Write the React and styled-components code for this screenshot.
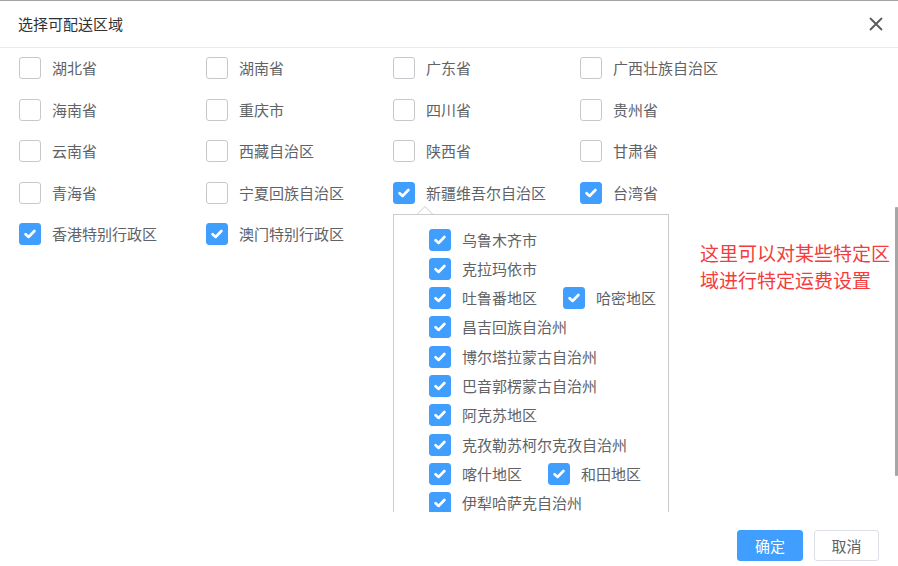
import React from "react";
import styled, { createGlobalStyle } from "styled-components";

const GlobalStyle = createGlobalStyle`
  html, body {
    margin: 0;
    padding: 0;
    background: #fff;
  }
  body {
    font-family: "Noto Sans CJK SC", "Noto Sans", sans-serif;
  }
`;

const Dialog = styled.div`
  position: relative;
  width: 898px;
  height: 566px;
  box-sizing: border-box;
  border-top: 1px solid #a3a3a3;
  background: #fff;
  display: flex;
  flex-direction: column;
  overflow: hidden;
`;

const Header = styled.div`
  flex: none;
  height: 46px;
  display: flex;
  align-items: center;
  justify-content: space-between;
  padding: 0 15px 0 18px;
  border-bottom: 1px solid #ebebeb;
`;

const Title = styled.span`
  font-size: 15px;
  line-height: 20px;
  color: #303133;
`;

const CloseButton = styled.button`
  width: 14px;
  height: 14px;
  padding: 0;
  border: 0;
  background: none;
  display: flex;
  cursor: pointer;
`;

const Body = styled.div`
  position: relative;
  flex: none;
  height: 464px;
  box-sizing: border-box;
  padding: 9px 0 0 19px;
  overflow: hidden;
`;

// thin scroll thumb at the dialog's right edge
const ScrollThumb = styled.div`
  position: absolute;
  right: 0;
  top: 206px;
  width: 3px;
  height: 269px;
  background: #a6a6a6;
  border-radius: 1px;
`;

const ProvinceGrid = styled.div`
  display: grid;
  grid-template-columns: repeat(4, 187px);
  row-gap: 19.5px;
`;

const Option = styled.div`
  position: relative;
  display: flex;
  align-items: center;
  gap: 11px;
  height: 22px;
  font-size: 15px;
  line-height: 22px;
  color: #606266;
  white-space: nowrap;
  cursor: pointer;
`;

const Box = styled.span`
  flex: none;
  width: 22px;
  height: 22px;
  box-sizing: border-box;
  border-radius: 3px;
  border: 1px solid ${(p) => (p.$checked ? "#409eff" : "#c6c8cc")};
  background: ${(p) => (p.$checked ? "#409eff" : "#fff")};
  display: flex;
  align-items: center;
  justify-content: center;
`;

const Popover = styled.div`
  position: absolute;
  top: 32px;
  left: 0;
  z-index: 2;
  width: 276px;
  height: 320px;
  box-sizing: border-box;
  padding: 14px 5px 0 35px;
  border: 1px solid #cccccc;
  border-bottom: 0;
  background: #fff;
  display: flex;
  flex-wrap: wrap;
  align-content: flex-start;
  column-gap: 26px;
  row-gap: 7.33px;

  &::before,
  &::after {
    content: "";
    position: absolute;
    width: 0;
    height: 0;
    border-left: 8px solid transparent;
    border-right: 8px solid transparent;
  }
  &::before {
    top: -9px;
    left: 23px;
    border-bottom: 8px solid #cccccc;
  }
  &::after {
    top: -7.5px;
    left: 24px;
    border-left-width: 7px;
    border-right-width: 7px;
    border-bottom: 7px solid #fff;
  }
`;

const Note = styled.div`
  position: absolute;
  left: 700px;
  top: 238px;
  width: 192px;
  font-size: 19px;
  line-height: 27px;
  color: #f53b3b;
  z-index: 3;
`;

const Footer = styled.div`
  flex: none;
  display: flex;
  justify-content: flex-end;
  gap: 11px;
  padding: 18px 19px 0 0;
`;

const Button = styled.button`
  width: ${(p) => (p.$primary ? "66px" : "65px")};
  height: 31px;
  box-sizing: border-box;
  border-radius: 3px;
  border: 1px solid ${(p) => (p.$primary ? "#409eff" : "#dcdfe6")};
  background: ${(p) => (p.$primary ? "#409eff" : "#fff")};
  color: ${(p) => (p.$primary ? "#fff" : "#606266")};
  font-family: inherit;
  font-size: 15px;
  padding: 0;
  cursor: pointer;
`;

const provinces = [
  "湖北省", "湖南省", "广东省", "广西壮族自治区",
  "海南省", "重庆市", "四川省", "贵州省",
  "云南省", "西藏自治区", "陕西省", "甘肃省",
  "青海省", "宁夏回族自治区", "新疆维吾尔自治区", "台湾省",
  "香港特别行政区", "澳门特别行政区",
];

const checked = ["新疆维吾尔自治区", "台湾省", "香港特别行政区", "澳门特别行政区"];

const xinjiang = [
  "乌鲁木齐市", "克拉玛依市", "吐鲁番地区", "哈密地区", "昌吉回族自治州",
  "博尔塔拉蒙古自治州", "巴音郭楞蒙古自治州", "阿克苏地区", "克孜勒苏柯尔克孜自治州",
  "喀什地区", "和田地区", "伊犁哈萨克自治州",
];

function Check({ on }) {
  return (
    <Box $checked={on}>
      {on && (
        <svg width="12" height="10" viewBox="0 0 12 10">
          <path d="M1.6 5.2 L4.6 8 L10.4 2" fill="none" stroke="#fff" strokeWidth="2.6" strokeLinecap="round" strokeLinejoin="round" />
        </svg>
      )}
    </Box>
  );
}

export default function App() {
  return (
    <>
      <GlobalStyle />
      <Dialog>
        <Header>
          <Title>选择可配送区域</Title>
          <CloseButton aria-label="关闭">
            <svg width="14" height="14" viewBox="0 0 14 14">
              <path d="M1.5 1.5 L12.5 12.5 M12.5 1.5 L1.5 12.5" stroke="#5a5a5a" strokeWidth="1.8" strokeLinecap="round" />
            </svg>
          </CloseButton>
        </Header>
        <Body>
          <ProvinceGrid>
            {provinces.map((name) => (
              <Option key={name}>
                <Check on={checked.includes(name)} />
                {name}
                {name === "新疆维吾尔自治区" && (
                  <Popover>
                    {xinjiang.map((city) => (
                      <Option key={city}>
                        <Check on />
                        {city}
                      </Option>
                    ))}
                  </Popover>
                )}
              </Option>
            ))}
          </ProvinceGrid>
        </Body>
        <ScrollThumb />
        <Note>这里可以对某些特定区域进行特定运费设置</Note>
        <Footer>
          <Button $primary>确定</Button>
          <Button>取消</Button>
        </Footer>
      </Dialog>
    </>
  );
}
